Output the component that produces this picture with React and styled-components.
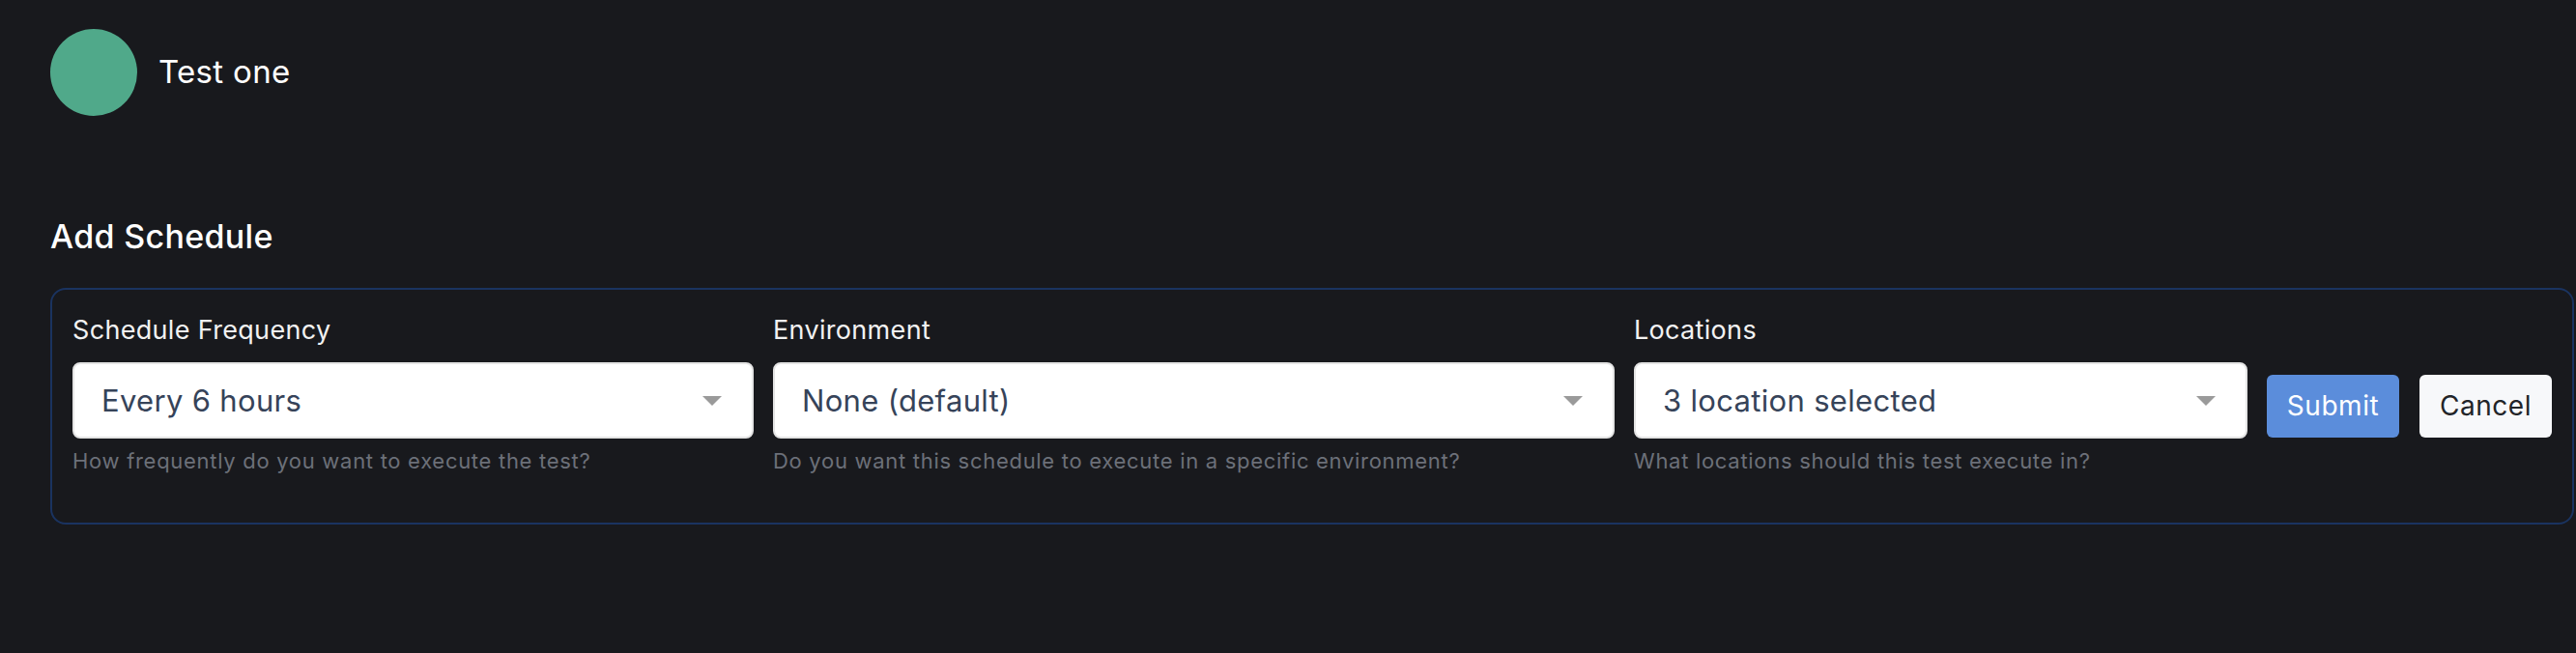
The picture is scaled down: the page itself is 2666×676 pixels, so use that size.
import React from "react";
import styled, { createGlobalStyle } from "styled-components";

const GlobalStyle = createGlobalStyle`
    html, body {
        margin: 0;
        padding: 0;
        background: #18191d;
    }
    body {
        font-family: Inter, "Noto Sans", sans-serif;
        letter-spacing: 0.02em;
        color: #ffffff;
    }
`;

const Page = styled.div`
    min-height: 676px;
    padding: 30px 0 0 52px;
    box-sizing: border-box;
    background: #18191d;
`;

const Header = styled.header`
    display: flex;
    align-items: center;
    gap: 22px;
`;

const Avatar = styled.div`
    width: 90px;
    height: 90px;
    border-radius: 50%;
    background: #50a98a;
`;

const TestName = styled.h1`
    margin: 0;
    font-size: 33px;
    font-weight: 400;
    line-height: 1.2;
    color: #ffffff;
`;

const Title = styled.h2`
    margin: 105px 0 32px;
    font-size: 34px;
    font-weight: 500;
    line-height: 1.2;
    color: #ffffff;
`;

const FormBox = styled.form`
    width: 2612px;
    box-sizing: border-box;
    display: flex;
    align-items: flex-start;
    gap: 20px;
    padding: 26px 20px 50px 21px;
    border: 2px solid #1a3360;
    border-radius: 16px;
`;

const Field = styled.div`
    display: flex;
    flex-direction: column;
    width: ${(p) => p.width}px;
    flex-shrink: 0;
`;

const Label = styled.label`
    font-size: 27px;
    line-height: 1.2;
    color: #f2f2f2;
    margin-bottom: 17px;
`;

const Select = styled.div`
    height: 79px;
    box-sizing: border-box;
    display: flex;
    align-items: center;
    justify-content: space-between;
    padding: 0 31px 0 28px;
    background: #ffffff;
    border: 2px solid #e4e4e4;
    border-radius: 8px;
    font-size: 31px;
    color: #364359;
`;

const Help = styled.p`
    margin: 10px 0 0;
    font-size: 22px;
    line-height: 1.2;
    letter-spacing: 0.032em;
    color: #6c7079;
`;

const Actions = styled.div`
    display: flex;
    gap: 21px;
    margin-top: 62px;
`;

const Button = styled.button`
    width: 137px;
    height: 65px;
    border: none;
    border-radius: 6px;
    font-family: Inter, "Noto Sans", sans-serif;
    font-size: 28px;
    letter-spacing: 0.02em;
    background: ${(p) => (p.primary ? "#5b8ddb" : "#f7f8fa")};
    color: ${(p) => (p.primary ? "#ffffff" : "#222428")};
    cursor: pointer;
`;

function Caret() {
    return (
        <svg width="20" height="10" viewBox="0 0 20 10">
            <polygon points="0,0 20,0 10,10" fill="#9a9a9a" />
        </svg>
    );
}

const fields = [
    {
        label: "Schedule Frequency",
        value: "Every 6 hours",
        help: "How frequently do you want to execute the test?",
        width: 705,
    },
    {
        label: "Environment",
        value: "None (default)",
        help: "Do you want this schedule to execute in a specific environment?",
        width: 871,
    },
    {
        label: "Locations",
        value: "3 location selected",
        help: "What locations should this test execute in?",
        width: 635,
    },
];

export default function App() {
    return (
        <Page>
            <GlobalStyle />
            <Header>
                <Avatar />
                <TestName>Test one</TestName>
            </Header>
            <Title>Add Schedule</Title>
            <FormBox onSubmit={(e) => e.preventDefault()}>
                {fields.map((f) => (
                    <Field key={f.label} width={f.width}>
                        <Label>{f.label}</Label>
                        <Select>
                            <span>{f.value}</span>
                            <Caret />
                        </Select>
                        <Help>{f.help}</Help>
                    </Field>
                ))}
                <Actions>
                    <Button primary type="submit">Submit</Button>
                    <Button type="button">Cancel</Button>
                </Actions>
            </FormBox>
        </Page>
    );
}
